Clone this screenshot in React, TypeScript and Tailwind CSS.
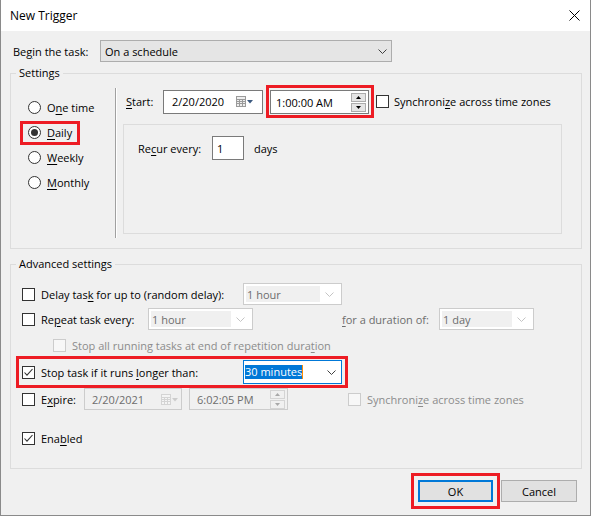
import type { ReactNode } from "react"

const RED = "border-[#ed1c24]"

function K({ children }: { children: ReactNode }) {
  return <span className="underline decoration-1 underline-offset-[2px]">{children}</span>
}

function Chevron({ color = "#505050" }: { color?: string }) {
  return (
    <svg width="9" height="5" viewBox="0 0 9 5">
      <path d="M0.5 0.5 L4.5 4.5 L8.5 0.5" fill="none" stroke={color} strokeWidth="1" />
    </svg>
  )
}

function Check({ checked, disabled }: { checked?: boolean; disabled?: boolean }) {
  return (
    <span
      className={
        disabled
          ? "w-[13px] h-[13px] shrink-0 border border-[#cccccc] bg-[#f7f7f7] flex items-center justify-center"
          : "w-[13px] h-[13px] shrink-0 border border-[#333333] bg-white flex items-center justify-center"
      }
    >
      {checked && (
        <svg width="11" height="11" viewBox="0 0 11 11">
          <path d="M1.5 5.5 L4 8.2 L9.5 2" fill="none" stroke="#333333" strokeWidth="1.1" />
        </svg>
      )}
    </span>
  )
}

function Radio({ checked }: { checked?: boolean }) {
  return (
    <span className="w-[13px] h-[13px] shrink-0 rounded-full border border-[#333333] bg-white flex items-center justify-center">
      {checked && <span className="w-[7px] h-[7px] rounded-full bg-[#333333]" />}
    </span>
  )
}

function CalIcon({ dim }: { dim?: boolean }) {
  const line = dim ? "#d4d4d4" : "#9a9a9a"
  return (
    <svg width="17" height="11" viewBox="0 0 17 11">
      <rect x="0.5" y="0.5" width="9" height="10" fill={dim ? "#f4f4f4" : "#eeeeee"} stroke={line} />
      <path d="M0.5 3.5 H9.5 M0.5 5.5 H9.5 M0.5 7.5 H9.5 M3.5 3 V10.5 M6.5 3 V10.5" stroke={line} />
      <path d="M11 4 H17 L14 7.5 Z" fill={dim ? "#cccccc" : "#3d5a80"} />
    </svg>
  )
}

function Spinner({ dim }: { dim?: boolean }) {
  const btn = dim
    ? "w-[15px] h-[9px] border border-[#d4d4d4] bg-[#f0f0f0] flex items-center justify-center"
    : "w-[15px] h-[9px] border border-[#acacac] bg-[#e5e5e5] flex items-center justify-center"
  const fill = dim ? "#a8a8a8" : "#000000"
  return (
    <span className="flex flex-col gap-[1px]">
      <span className={btn}>
        <svg width="5" height="3" viewBox="0 0 5 3"><path d="M0 3 L2.5 0 L5 3 Z" fill={fill} /></svg>
      </span>
      <span className={btn}>
        <svg width="5" height="3" viewBox="0 0 5 3"><path d="M0 0 L2.5 3 L5 0 Z" fill={fill} /></svg>
      </span>
    </span>
  )
}

function DimCombo({ text, width }: { text: string; width: string }) {
  return (
    <div className={`${width} h-[22px] shrink-0 border border-[#cccccc] bg-white flex items-center p-[2px]`}>
      <div className="flex-1 h-full bg-[#f0f0f0] text-[#6d6d6d] pl-[1px] flex items-center">{text}</div>
      <div className="w-[19px] flex justify-center">
        <Chevron color="#c4c4c4" />
      </div>
    </div>
  )
}

export default function App() {
  return (
    <div className="w-[591px] h-[516px] flex flex-col overflow-hidden border-x border-b border-[#8a8a8a] bg-[#f0f0f0] text-[11px] leading-[15px] text-black font-['Open_Sans',sans-serif] select-none">
      {/* title bar */}
      <div className="h-[31px] shrink-0 bg-white flex items-center justify-between pl-[9px] pr-[10px]">
        <span className="text-[12px]">New Trigger</span>
        <svg width="11" height="11" viewBox="0 0 11 11">
          <path d="M0.5 0.5 L10.5 10.5 M10.5 0.5 L0.5 10.5" stroke="#000000" strokeWidth="1" />
        </svg>
      </div>

      {/* begin the task */}
      <div className="mt-[9px] h-[22px] flex items-center pl-[12px]">
        <span className="w-[87px] shrink-0">
          Be<K>g</K>in the task:
        </span>
        <div className="w-[292px] h-[22px] border border-[#adadad] bg-[#e5e5e5] flex items-center justify-between pl-[4px] pr-[4px]">
          <span>On a schedule</span>
          <Chevron color="#404040" />
        </div>
      </div>

      {/* settings */}
      <fieldset className="ml-[9px] mt-[3px] w-[572px] border border-[#dcdcdc] pb-[10px]">
        <legend className="ml-[5px] px-[3px] leading-[16px]">Settings</legend>
        <div className="mt-[4px] flex items-start">
          <div className="w-[104px] shrink-0 flex flex-col pl-[17px] pt-[10px]">
            <div className="h-[25px] flex items-center gap-[6px]">
              <Radio />
              <span>
                O<K>n</K>e time
              </span>
            </div>
            <div className="h-[25px] flex items-center">
              <div className={`-ml-[8px] w-[60px] h-[24px] border-[3px] ${RED} flex items-center gap-[6px] pl-[5px]`}>
                <Radio checked />
                <span>
                  <K>D</K>aily
                </span>
              </div>
            </div>
            <div className="h-[25px] flex items-center gap-[6px]">
              <Radio />
              <span>
                <K>W</K>eekly
              </span>
            </div>
            <div className="h-[25px] flex items-center gap-[6px]">
              <Radio />
              <span>
                <K>M</K>onthly
              </span>
            </div>
          </div>

          <div className="mt-[3px] h-[150px] w-[2px] shrink-0 border-l border-l-[#a0a0a0] border-r border-r-white" />

          <div className="flex flex-col">
            <div className="h-[33px] flex items-center pl-[9px]">
              <span className="w-[37px] shrink-0">
                <K>S</K>tart:
              </span>
              <div className="w-[100px] h-[24px] shrink-0 border border-[#7a7a7a] bg-white flex items-center justify-between pl-[8px] pr-[9px]">
                <span>2/20/2020</span>
                <CalIcon />
              </div>
              <div className={`ml-[3px] border-[3px] ${RED} pl-[1px] pr-[2px] pt-[2px] pb-[1px]`}>
                <div className="w-[99px] h-[24px] border border-[#7a7a7a] bg-white flex items-center justify-between pl-[5px] pr-[2px]">
                  <span>1:00:00 AM</span>
                  <Spinner />
                </div>
              </div>
              <span className="ml-[2px]">
                <Check />
              </span>
              <span className="ml-[5px]">
                Synchroni<K>z</K>e across time zones
              </span>
            </div>

            <div className="ml-[6px] mt-[6px] w-[439px] h-[110px] border border-[#dcdcdc] pl-[14px] pt-[11px]">
              <div className="flex items-center">
                <span className="w-[74px] shrink-0">
                  Re<K>c</K>ur every:
                </span>
                <div className="w-[32px] h-[24px] border border-[#7a7a7a] bg-white flex items-center pl-[4px]">1</div>
                <span className="ml-[10px]">days</span>
              </div>
            </div>
          </div>
        </div>
      </fieldset>

      {/* advanced settings */}
      <fieldset className="ml-[9px] mt-[7px] w-[572px] border border-[#dcdcdc] pb-[20px]">
        <legend className="ml-[5px] px-[3px] leading-[16px]">Advanced settings</legend>

        <div className="mt-[11px] h-[22px] flex items-center pl-[11px]">
          <Check />
          <span className="ml-[6px] w-[202px] shrink-0">
            Delay tas<K>k</K> for up to (random delay):
          </span>
          <DimCombo text="1 hour" width="w-[99px]" />
        </div>

        <div className="mt-[3px] h-[22px] flex items-center pl-[11px]">
          <Check />
          <span className="ml-[6px] w-[107px] shrink-0">
            Re<K>p</K>eat task every:
          </span>
          <DimCombo text="1 hour" width="w-[105px]" />
          <span className="ml-[89px] w-[97px] shrink-0 text-[#6d6d6d]">
            <K>f</K>or a duration of:
          </span>
          <DimCombo text="1 day" width="w-[95px]" />
        </div>

        <div className="mt-[5px] h-[20px] flex items-center pl-[42px]">
          <Check disabled />
          <span className="ml-[6px] text-[#8c8c8c]">
            Stop all running tasks at end of repetition dura<K>t</K>ion
          </span>
        </div>

        <div className={`mt-[1px] ml-[5px] w-[332px] h-[32px] border-[3px] ${RED} flex items-center pl-[3px]`}>
          <Check checked />
          <span className="ml-[6px] w-[202px] shrink-0">
            Stop task if it runs <K>l</K>onger than:
          </span>
          <div className="w-[99px] h-[24px] shrink-0 border border-[#0078d7] bg-white flex items-center pl-[1px] pr-[5px]">
            <span className="bg-[#0078d7] text-white h-[14px] leading-[14px]">30 minutes</span>
            <span className="w-[1px] h-[14px] bg-[#ff8c00]" />
            <span className="flex-1" />
            <Chevron color="#404040" />
          </div>
        </div>

        <div className="h-[22px] flex items-center pl-[11px]">
          <Check />
          <span className="ml-[6px] w-[43px] shrink-0">
            E<K>x</K>pire:
          </span>
          <div className="w-[98px] h-[22px] shrink-0 border border-[#cccccc] bg-[#f0f0f0] text-[#6d6d6d] flex items-center justify-between pl-[7px] pr-[3px]">
            <span>2/20/2021</span>
            <CalIcon dim />
          </div>
          <div className="ml-[7px] w-[99px] h-[22px] shrink-0 border border-[#cccccc] bg-[#f0f0f0] text-[#6d6d6d] flex items-center justify-between pl-[7px] pr-[2px]">
            <span>6:02:05 PM</span>
            <Spinner dim />
          </div>
          <span className="ml-[60px]">
            <Check disabled />
          </span>
          <span className="ml-[6px] text-[#8c8c8c]">
            Synchroni<K>z</K>e across time zones
          </span>
        </div>

        <div className="mt-[18px] h-[20px] flex items-center pl-[11px]">
          <Check checked />
          <span className="ml-[6px]">
            Ena<K>b</K>led
          </span>
        </div>
      </fieldset>

      {/* buttons */}
      <div className="mt-[4px] flex items-center justify-end pr-[13px]">
        <div className={`border-[3px] ${RED} p-[4px]`}>
          <button className="w-[75px] h-[22px] border-2 border-[#0078d7] bg-[#e1e1e1] flex items-center justify-center">
            OK
          </button>
        </div>
        <button className="ml-[1px] w-[76px] h-[22px] border border-[#adadad] bg-[#e1e1e1] flex items-center justify-center">
          Cancel
        </button>
      </div>
    </div>
  )
}
